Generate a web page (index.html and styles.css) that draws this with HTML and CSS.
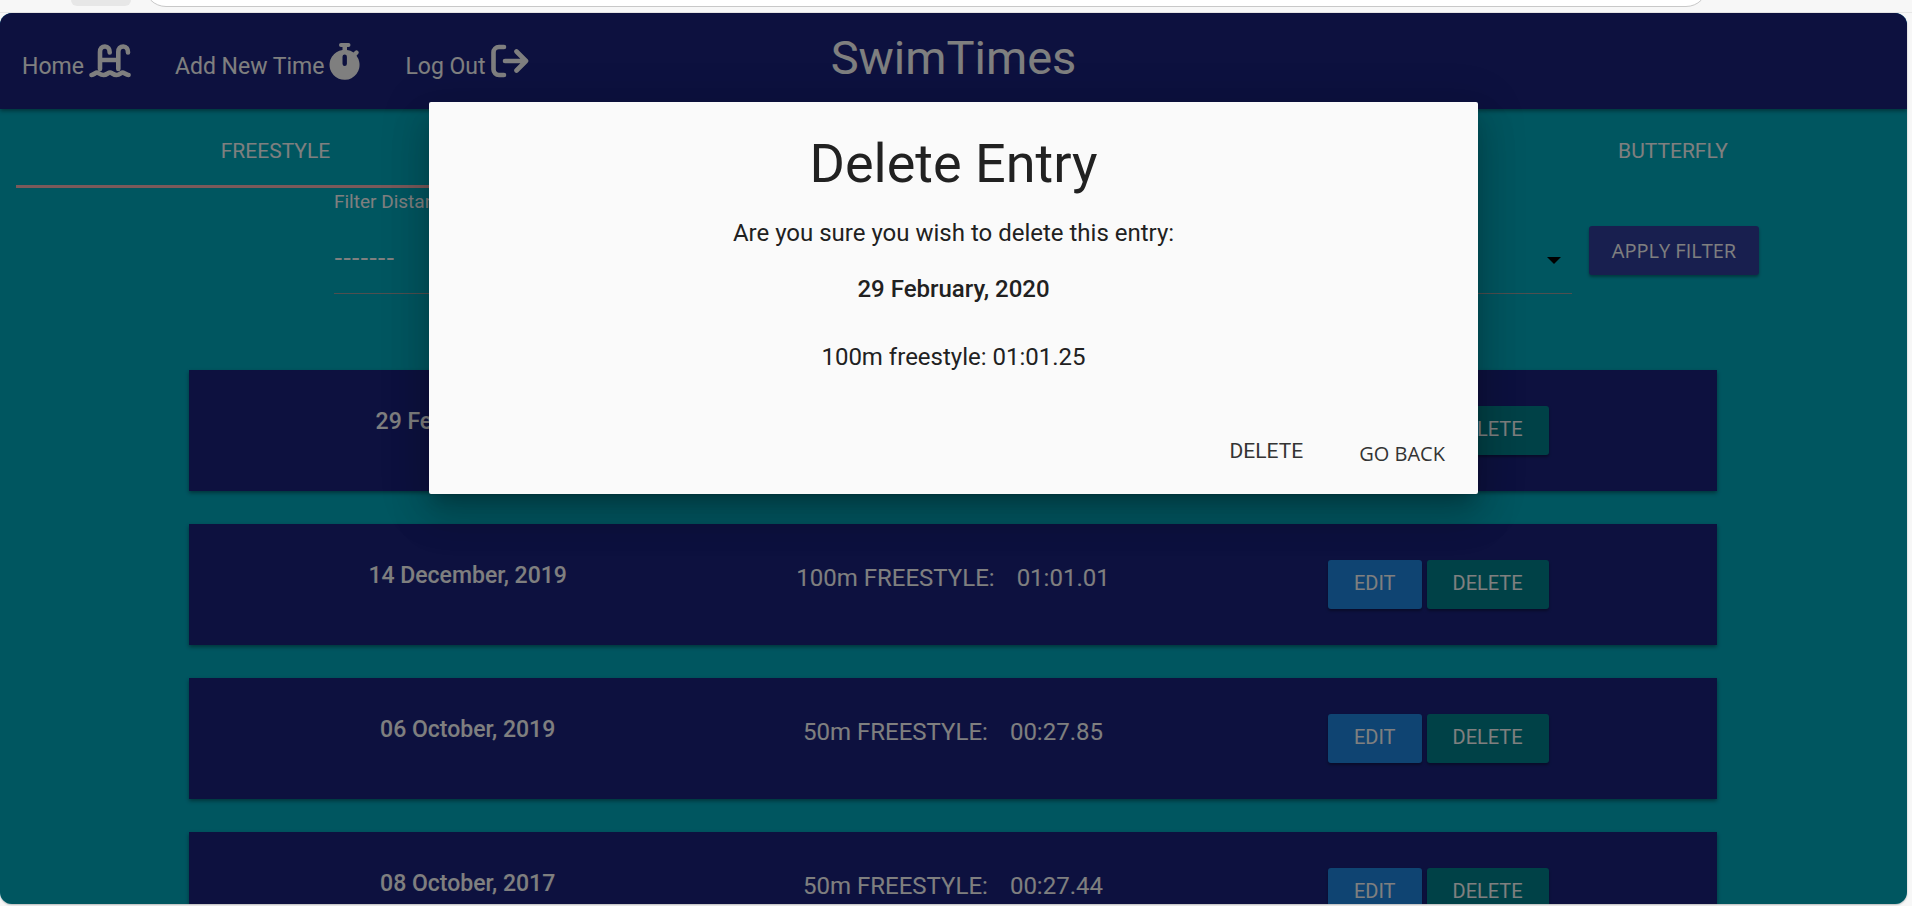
FILE: index.html
```html
<!DOCTYPE html>
<html lang="en">
<head>
<meta charset="utf-8">
<title>SwimTimes</title>
<link rel="stylesheet" href="styles.css">
</head>
<body>
<div class="toolbar"><span class="toolbar-button"></span><span class="address"></span></div>
<div class="page">
  <header class="navbar">
    <nav class="nav-links">
      <a href="#">Home
        <svg class="icon-ladder" width="42" height="34" viewBox="0 0 42 34" fill="none" stroke="currentColor" stroke-width="4.600" stroke-linecap="round"><path d="M11 25V8c0-3.500 2-5.500 5-5.500s4.700 2.500 4.700 6M29.300 25V8c0-3.500 2-5.500 5-5.500s4.700 2.500 4.700 6M11 16h18"/><path d="M2.500 31c2.500-.3 4-2.500 5.500-2.500s3 2.500 6.500 2.500 4.500-2.500 6.500-2.500 3 2.500 6.500 2.500 4.500-2.500 6-2.500 3.500 2.300 6 2.500"/></svg></a>
      <a href="#">Add New Time
        <svg class="icon-watch" width="32" height="38" viewBox="0 0 32 38" fill="currentColor"><path fill-rule="evenodd" d="M12 1h7.500a2 2 0 0 1 0 4H18v3a14 14 0 0 1 6.500 2.500L26 9a2 2 0 0 1 3 3l-1.500 1.800A15 15 0 1 1 13.500 8V5H12a2 2 0 0 1 0-4zM15.700 12.500a2.200 2.200 0 0 0-2.200 2.200v7a2.200 2.200 0 0 0 4.400 0v-7a2.200 2.200 0 0 0-2.200-2.200z"/></svg></a>
      <a href="#">Log Out
        <svg class="icon-exit" width="38" height="34" viewBox="0 0 38 34" fill="none" stroke="currentColor" stroke-width="4.600" stroke-linecap="round" stroke-linejoin="round"><path d="M13 3H8a5.500 5.500 0 0 0-5.500 5.500v17A5.500 5.500 0 0 0 8 31h5M14 17h21M25.500 7.500L35 17l-9.500 9.500"/></svg></a>
    </nav>
    <a href="#" class="brand">SwimTimes</a>
  </header>
  <main>
    <nav class="tabs">
      <a href="#" class="active">FREESTYLE</a>
      <a href="#" class="last">BUTTERFLY</a>
    </nav>
    <form class="filter">
      <div class="field">
        <label for="distance">Filter Distance</label>
        <div class="select-wrap">
          <select id="distance"><option>-------</option></select>
          <svg width="14" height="7" viewBox="0 0 14 7"><path d="M0 0h14L7 7z"/></svg>
        </div>
      </div>
      <button type="button" class="btn apply">APPLY FILTER</button>
    </form>
    <section class="cards">
      <article class="card"><strong>29 February, 2020</strong><p><span>100m FREESTYLE:</span><span>01:01.25</span></p><div class="actions"><button class="btn edit">EDIT</button><button class="btn delete">DELETE</button></div></article>
      <article class="card"><strong>14 December, 2019</strong><p><span>100m FREESTYLE:</span><span>01:01.01</span></p><div class="actions"><button class="btn edit">EDIT</button><button class="btn delete">DELETE</button></div></article>
      <article class="card"><strong>06 October, 2019</strong><p><span>50m FREESTYLE:</span><span>00:27.85</span></p><div class="actions"><button class="btn edit">EDIT</button><button class="btn delete">DELETE</button></div></article>
      <article class="card"><strong>08 October, 2017</strong><p><span>50m FREESTYLE:</span><span>00:27.44</span></p><div class="actions"><button class="btn edit">EDIT</button><button class="btn delete">DELETE</button></div></article>
    </section>
  </main>
  <div class="overlay"></div>
  <div class="modal" role="dialog" aria-labelledby="modal-title">
    <h4 id="modal-title">Delete Entry</h4>
    <p>Are you sure you wish to delete this entry:</p>
    <p class="date">29 February, 2020</p>
    <p class="result">100m freestyle: 01:01.25</p>
    <div class="modal-footer">
      <button class="flat">DELETE</button>
      <button class="flat back">GO BACK</button>
    </div>
  </div>
</div>
</body>
</html>
```
FILE: styles.css
```css
* { box-sizing: border-box; }
body {
  margin: 0;
  height: 100vh;
  display: flex;
  flex-direction: column;
  background: #f7f7f7;
  font-family: Roboto, "Liberation Sans", sans-serif;
  font-size: 23px;
  overflow: hidden;
}
a { color: inherit; text-decoration: none; }
p, h4 { margin: 0; font-weight: 400; }

.toolbar {
  flex: none;
  height: 13px;
  padding: 0 204px 0 71px;
  display: flex;
  align-items: flex-end;
  gap: 13px;
  overflow: hidden;
  border-bottom: 1px solid #e6e6e6;
}
.toolbar-button {
  width: 60px;
  height: 20px;
  margin-bottom: 6px;
  border-radius: 6px;
  background: #e7e7e7;
}
.address {
  flex: 1;
  height: 44px;
  margin-bottom: 5px;
  border: 1px solid #c8c8c8;
  border-radius: 22px;
  background: #fff;
}

.page {
  position: relative;
  flex: 1;
  min-height: 0;
  margin: 0 5px 2px 0;
  border-radius: 12px;
  overflow: hidden;
  background: #00acc1;
  color: #fff;
  box-shadow: 0 1px 2px rgba(0, 0, 0, .25);
}

.navbar {
  position: relative;
  display: grid;
  grid-template-columns: 1fr auto 1fr;
  height: 96px;
  padding: 0 22px;
  background: #1a237e;
  box-shadow: 0 2px 4px rgba(0, 0, 0, .4);
}
.nav-links { display: flex; gap: 44px; padding-top: 29px; }
.nav-links a { display: flex; align-items: flex-start; gap: 5px; line-height: 50px; white-space: nowrap; }
.nav-links svg { flex: none; margin-top: 2px; }
.nav-links .icon-watch { margin-top: 0; }
.brand { font-size: 47px; line-height: 90px; }

main { padding: 0 16px; }
.tabs {
  display: grid;
  grid-template-columns: 519fr 920fr 436fr;
  font-size: 21px;
  text-align: center;
}
.tabs a { height: 79px; padding-top: 4px; line-height: 76px; }
.tabs .active { border-bottom: 3px solid #f6b2b5; }
.tabs .last { grid-column: 3; }

.filter { display: flex; align-items: flex-start; padding: 0 132px 0 318px; gap: 17px; }
.field { flex: 1; }
.field label { display: block; font-size: 19px; line-height: 28px; }
.select-wrap { position: relative; height: 78px; border-bottom: 1px solid #9e9e9e; }
.select-wrap select {
  width: 100%;
  height: 78px;
  padding: 6px 0 0;
  border: 0;
  appearance: none;
  background: none;
  color: inherit;
  font: 24px "DejaVu Sans", sans-serif;
}
.select-wrap svg { position: absolute; right: 11px; top: 41px; }

.btn {
  height: 49px;
  padding: 0 25px;
  border: 0;
  border-radius: 3px;
  color: #fff;
  font-family: inherit;
  font-size: 20px;
  white-space: nowrap;
  box-shadow: 0 2px 3px rgba(0, 0, 0, .35);
}
.apply { width: 170px; margin-top: 38px; padding: 0; background: #303f9f; font-family: "Open Sans", sans-serif; font-size: 20px; }
.edit { padding: 0 26px 4px; background: #1e88e5; }
.delete { padding: 0 26px 4px; background: #00838f; }

.cards { display: grid; gap: 33px; padding: 76px 174px 0 173px; }
.card {
  display: grid;
  grid-template-columns: repeat(3, 1fr);
  height: 121px;
  padding: 36px;
  background: #1a237e;
  box-shadow: 0 2px 4px rgba(0, 0, 0, .4);
  text-align: center;
}
.card strong { font-weight: 500; font-size: 23px; line-height: 32px; }
.card p { display: flex; justify-content: center; gap: 22px; font-size: 24px; line-height: 36px; }
.actions { display: flex; justify-content: center; gap: 5px; }

.overlay { position: absolute; inset: 0; background: rgba(0, 0, 0, .5); }
.modal {
  position: absolute;
  top: 10%;
  left: 0;
  right: 0;
  width: 55%;
  margin: 0 auto;
  padding: 30px 7px 6px;
  border-radius: 2px;
  background: #fafafa;
  color: #212121;
  text-align: center;
  font-size: 24px;
  line-height: 36px;
  box-shadow: 0 24px 38px 3px rgba(0, 0, 0, .14), 0 9px 46px 8px rgba(0, 0, 0, .12), 0 11px 15px -7px rgba(0, 0, 0, .2);
}
.modal h4 { font-size: 54px; line-height: 64px; margin-bottom: 19px; }
.modal .date { font-weight: 500; margin-top: 20px; }
.modal .result { margin-top: 32px; }
.modal-footer { display: flex; justify-content: flex-end; align-items: flex-start; gap: 4px; padding-top: 50px; }
.flat {
  height: 63px;
  padding: 0 26px 12px;
  border: 0;
  background: none;
  color: #343434;
  font-family: inherit;
  font-size: 21px;
}
.back { padding-bottom: 6px; font-family: "Open Sans", sans-serif; font-size: 20px; }
```
